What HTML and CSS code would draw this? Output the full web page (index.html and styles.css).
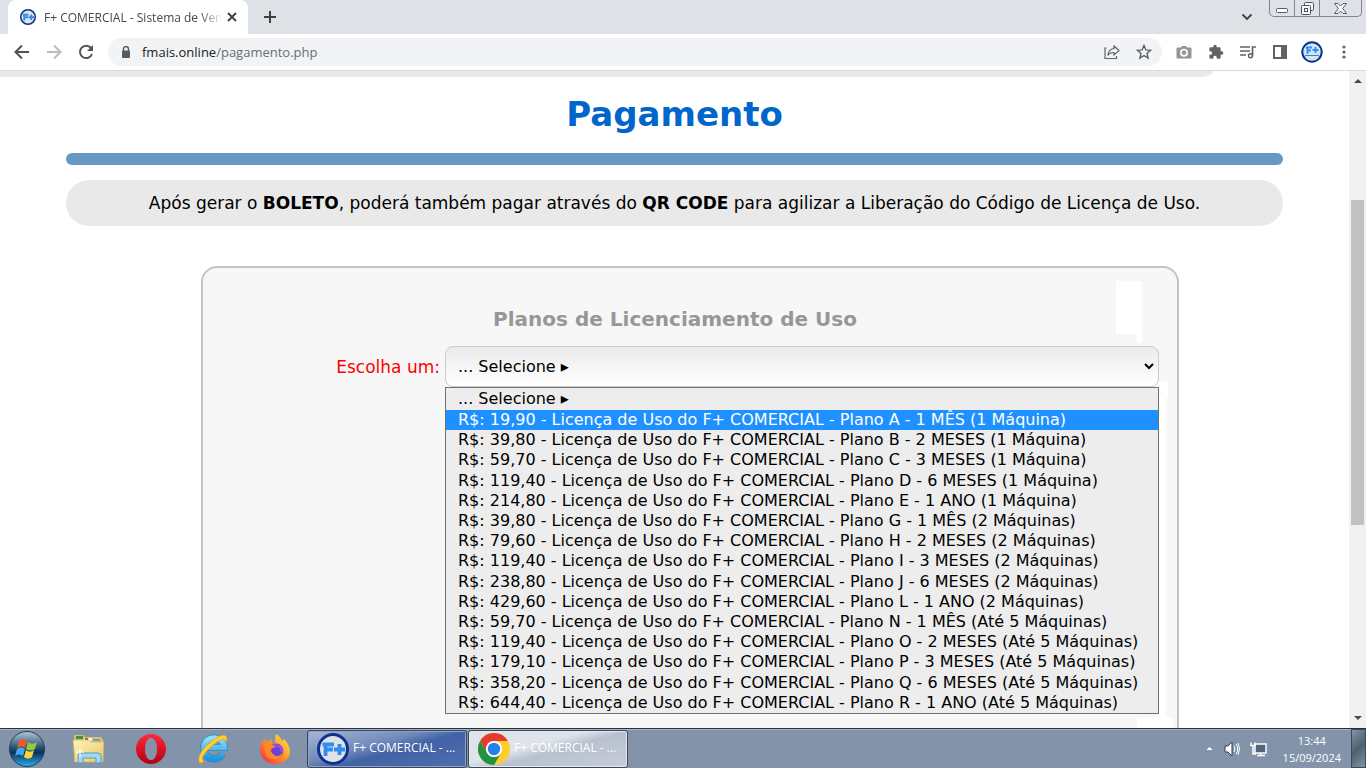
FILE: index.html
```html
<!DOCTYPE html>
<html lang="pt-BR">
<head>
<meta charset="utf-8">
<title>F+ COMERCIAL - Pagamento</title>
<link rel="stylesheet" href="styles.css">
</head>
<body>
<svg width="0" height="0" class="defs" aria-hidden="true">
  <defs>
    <linearGradient id="orb" x1="0" y1="0" x2="0" y2="1"><stop offset="0" stop-color="#b4c8d6"/><stop offset=".45" stop-color="#2b5478"/><stop offset=".6" stop-color="#0b3158"/><stop offset="1" stop-color="#25b4ee"/></linearGradient>
    <linearGradient id="folder" x1="0" y1="0" x2="1" y2="1"><stop offset="0" stop-color="#fff4b8"/><stop offset="1" stop-color="#e6c765"/></linearGradient>
    <linearGradient id="opera" x1="0" y1="0" x2="0" y2="1"><stop offset="0" stop-color="#ff2a3c"/><stop offset="1" stop-color="#b3000f"/></linearGradient>
    <linearGradient id="ie" x1="0" y1="0" x2="0" y2="1"><stop offset="0" stop-color="#8fe2ff"/><stop offset="1" stop-color="#1f93dc"/></linearGradient>
    <linearGradient id="fox" x1="1" y1="0" x2="0" y2="1"><stop offset="0" stop-color="#fff04a"/><stop offset=".45" stop-color="#ff9a28"/><stop offset="1" stop-color="#f5204e"/></linearGradient>
    <symbol id="fplus" viewBox="0 0 32 32">
      <circle cx="16" cy="16" r="14.500" fill="#dfe3e8" stroke="#0c318f" stroke-width="3"/>
      <path d="M5.500 11.500h11.500M8.500 10v13M8 16.500h8M17 16.500h11M22.500 11v11" fill="none" stroke="#2f8df0" stroke-width="3.800"/>
    </symbol>
  </defs>
</svg>
<div class="desktop">
  <header class="browser">
    <div class="tabstrip">
      <div class="tab">
        <svg class="favicon"><use href="#fplus"/></svg>
        <span class="tab-title">F+ COMERCIAL - Sistema de Ven</span>
        <button class="icon-btn tab-close" aria-label="Fechar guia"><svg width="10" height="10" viewBox="0 0 10 10"><path d="M1 1l8 8M9 1l-8 8" stroke="#3c4043" stroke-width="1.800"/></svg></button>
      </div>
      <button class="icon-btn new-tab" aria-label="Nova guia"><svg width="14" height="14" viewBox="0 0 14 14"><path d="M7 1v12M1 7h12" stroke="#3c4043" stroke-width="2"/></svg></button>
      <button class="icon-btn tab-search" aria-label="Pesquisar guias"><svg width="12" height="8" viewBox="0 0 12 8"><path d="M1.500 1.500L6 6l4.500-4.500" fill="none" stroke="#3c4043" stroke-width="1.800"/></svg></button>
      <div class="window-controls">
        <button class="win-btn win-min" aria-label="Minimizar"><svg width="13" height="5" viewBox="0 0 13 5"><rect x=".5" y=".5" width="11" height="4" rx="1" fill="#fff" stroke="#555c66"/></svg></button>
        <button class="win-btn" aria-label="Restaurar"><svg width="13" height="13" viewBox="0 0 13 13" fill="#f4f5f7" stroke="#4d545e"><rect x="3.500" y=".5" width="9" height="8" rx="1"/><rect x=".5" y="3.500" width="9" height="9" rx="1"/><rect x="3.500" y="6.500" width="3" height="3"/></svg></button>
        <button class="win-btn win-close" aria-label="Fechar"><svg width="13" height="11" viewBox="0 0 13 11"><path d="M.5.500h3.500l2.500 2.500L9 .5h3.500L8.700 5.500l3.800 5H9L6.500 8 4 10.500H.5l3.800-5z" fill="#f6f7f8" stroke="#555c66"/></svg></button>
      </div>
    </div>
    <div class="toolbar">
      <nav class="nav">
        <button class="icon-btn" aria-label="Voltar"><svg width="16" height="16" viewBox="0 0 16 16"><path d="M15 8H2M8 1.500L1.500 8 8 14.500" fill="none" stroke="#50545a" stroke-width="2"/></svg></button>
        <button class="icon-btn" aria-label="Avançar"><svg width="16" height="16" viewBox="0 0 16 16"><path d="M1 8h13M8 1.500L14.500 8 8 14.500" fill="none" stroke="#b9bbbe" stroke-width="2"/></svg></button>
        <button class="icon-btn" aria-label="Recarregar"><svg width="16" height="16" viewBox="0 0 16 16"><path d="M13 4a6.200 6.200 0 1 0 1 6" fill="none" stroke="#50545a" stroke-width="2"/><path d="M15 1v6H9z" fill="#50545a"/></svg></button>
      </nav>
      <div class="omnibox">
        <svg width="10" height="13" viewBox="0 0 10 13"><rect x="1" y="4.500" width="8" height="7.500" rx="1" fill="#555a60"/><path d="M2.500 5V3a2.500 2.500 0 0 1 5 0v2" fill="none" stroke="#555a60" stroke-width="1.400"/></svg>
        <a class="url" href="#">fmais.online<span>/pagamento.php</span></a>
        <button class="icon-btn" aria-label="Compartilhar"><svg width="16" height="16" viewBox="0 0 16 16" fill="none" stroke="#5f6368" stroke-width="1.200"><path d="M2.500 4H1v10.500h11.500V12"/><path d="M10 2l5 4.500L10 11V8.500c-3 0-5 .8-6 3C4.300 7.500 6 5 10 4.500z"/></svg></button>
        <button class="icon-btn" aria-label="Favoritar"><svg width="16" height="16" viewBox="0 0 16 16"><path d="M8 1.500l1.900 4.400 4.700.4-3.600 3.100 1.100 4.700L8 11.600l-4.100 2.500L5 9.400 1.400 6.300l4.700-.4z" fill="none" stroke="#5f6368" stroke-width="1.400"/></svg></button>
      </div>
      <div class="extensions">
        <button class="icon-btn" aria-label="Captura"><svg width="16" height="16" viewBox="0 0 16 16"><path d="M1.500 3.500H5L6 2h4l1 1.500h3.500q1 0 1 1v9q0 1-1 1h-13q-1 0-1-1v-9q0-1 1-1z" fill="#949494"/><circle cx="8" cy="8.700" r="3.200" fill="#999" stroke="#fff" stroke-width="1.600"/></svg></button>
        <button class="icon-btn" aria-label="Extensões"><svg width="16" height="16" viewBox="0 0 24 24"><path d="M20.500 11H19V7a2 2 0 0 0-2-2h-4V3.500a2.500 2.500 0 0 0-5 0V5H4a2 2 0 0 0-2 2v3.800h1.500a2.700 2.700 0 0 1 0 5.400H2V20a2 2 0 0 0 2 2h3.800v-1.500a2.700 2.700 0 0 1 5.400 0V22H17a2 2 0 0 0 2-2v-4h1.500a2.500 2.500 0 0 0 0-5z" fill="#5f6368"/></svg></button>
        <button class="icon-btn" aria-label="Mídia"><svg width="16" height="16" viewBox="0 0 16 16"><path d="M0 3h10M0 7h10M0 11h6M16 3h-3.500v8.500" fill="none" stroke="#5f6368" stroke-width="1.700"/><circle cx="10.500" cy="11.800" r="2" fill="none" stroke="#5f6368" stroke-width="1.500"/></svg></button>
        <button class="icon-btn" aria-label="Painel lateral"><svg width="16" height="16" viewBox="0 0 16 16"><path d="M1 1h14v14H1zM3 3v10h6V3z" fill="#5f6368" fill-rule="evenodd"/></svg></button>
        <button class="icon-btn avatar" aria-label="Perfil"><svg width="22" height="22" viewBox="0 0 22 22"><circle cx="11" cy="11" r="9.700" fill="#dbe4ee" stroke="#0a3190" stroke-width="2"/><path d="M5 6.500h6M6.500 6v7M6 9.500h4M11.500 9h6M14.500 6v6" fill="none" stroke="#2793f1" stroke-width="1.900"/><path d="M4 14.500h14" stroke="#2f83d4"/></svg></button>
        <button class="icon-btn" aria-label="Menu"><svg width="16" height="16" viewBox="0 0 16 16" fill="#5f6368"><circle cx="8" cy="3" r="1.600"/><circle cx="8" cy="8" r="1.600"/><circle cx="8" cy="13" r="1.600"/></svg></button>
      </div>
    </div>
  </header>
  <div class="viewport">
    <main class="page">
      <div class="top-strip"></div>
      <h1>Pagamento</h1>
      <div class="rule"></div>
      <p class="notice">Após gerar o <b>BOLETO</b>, poderá também pagar através do <b>QR CODE</b> para agilizar a Liberação do Código de Licença de Uso.</p>
      <form class="card">
        <h2>Planos de Licenciamento de Uso</h2>
        <div class="field">
          <label for="plan">Escolha um:</label>
          <div class="picker">
            <select id="plan" class="plan-select"><option>... Selecione ▸</option></select>
            <ul class="options" role="listbox" aria-label="Planos">
              <li>... Selecione ▸</li>
              <li class="active">R$: 19,90 - Licença de Uso do F+ COMERCIAL - Plano A - 1 MÊS (1 Máquina)</li>
              <li>R$: 39,80 - Licença de Uso do F+ COMERCIAL - Plano B - 2 MESES (1 Máquina)</li>
              <li>R$: 59,70 - Licença de Uso do F+ COMERCIAL - Plano C - 3 MESES (1 Máquina)</li>
              <li>R$: 119,40 - Licença de Uso do F+ COMERCIAL - Plano D - 6 MESES (1 Máquina)</li>
              <li>R$: 214,80 - Licença de Uso do F+ COMERCIAL - Plano E - 1 ANO (1 Máquina)</li>
              <li>R$: 39,80 - Licença de Uso do F+ COMERCIAL - Plano G - 1 MÊS (2 Máquinas)</li>
              <li>R$: 79,60 - Licença de Uso do F+ COMERCIAL - Plano H - 2 MESES (2 Máquinas)</li>
              <li>R$: 119,40 - Licença de Uso do F+ COMERCIAL - Plano I - 3 MESES (2 Máquinas)</li>
              <li>R$: 238,80 - Licença de Uso do F+ COMERCIAL - Plano J - 6 MESES (2 Máquinas)</li>
              <li>R$: 429,60 - Licença de Uso do F+ COMERCIAL - Plano L - 1 ANO (2 Máquinas)</li>
              <li>R$: 59,70 - Licença de Uso do F+ COMERCIAL - Plano N - 1 MÊS (Até 5 Máquinas)</li>
              <li>R$: 119,40 - Licença de Uso do F+ COMERCIAL - Plano O - 2 MESES (Até 5 Máquinas)</li>
              <li>R$: 179,10 - Licença de Uso do F+ COMERCIAL - Plano P - 3 MESES (Até 5 Máquinas)</li>
              <li>R$: 358,20 - Licença de Uso do F+ COMERCIAL - Plano Q - 6 MESES (Até 5 Máquinas)</li>
              <li>R$: 644,40 - Licença de Uso do F+ COMERCIAL - Plano R - 1 ANO (Até 5 Máquinas)</li>
            </ul>
          </div>
        </div>
        <span class="patch patch-top"></span>
        <span class="patch patch-notch"></span>
        <span class="patch patch-side"></span>
        <span class="patch patch-edge"></span>
        <span class="patch patch-bottom"></span>
      </form>
    </main>
    <div class="scrollbar">
      <svg width="8" height="5" viewBox="0 0 8 5"><path d="M0 5l4-4 4 4z" fill="#454b52"/></svg>
      <div class="track"><div class="thumb"></div></div>
      <svg width="8" height="5" viewBox="0 0 8 5"><path d="M0 0l4 4 4-4z" fill="#454b52"/></svg>
    </div>
  </div>
  <footer class="taskbar">
    <button class="icon-btn launcher start" aria-label="Iniciar"><svg width="38" height="38" viewBox="0 0 38 38"><circle cx="19" cy="19" r="17.500" fill="url(#orb)" stroke="#1d3d59"/><path d="M11 11c3-2 5-2 8 0l-2 7c-3-2-5-2-8 0z" fill="#f0562a"/><path d="M20 12c3 2 5 2 9 0l-2 7c-3 2-6 2-9 0z" fill="#8ccc40"/><path d="M9 19c3-2 5-2 8 0l-2 7c-3-2-5-2-8 0z" fill="#45a9ee"/><path d="M18 20c3 2 5 2 8 0l-2 7c-3 2-5 2-8 0z" fill="#ffd23c"/></svg></button>
    <button class="icon-btn launcher" aria-label="Explorador"><svg width="34" height="32" viewBox="0 0 34 32"><path d="M2 5V2h9l2 2h16l2 3v22H2z" fill="#e0be67"/><path d="M4 3h7v3H4z" fill="#389448"/><path d="M12 5h8v3h-8z" fill="#f1f1f1"/><path d="M13 5h3v2h-3z" fill="#d24424"/><path d="M21 6h7v2h-7z" fill="#59a7df"/><path d="M1 7h16l2 2h13l-1 20H3z" fill="url(#folder)" stroke="#d1b05a" stroke-width=".7"/><path d="M6 30v-7q0-3 3-3h17q3 0 3 3v7h-5v-5H11v5z" fill="#a6d7f2" stroke="#4a9bc9"/><path d="M8 15v9M4 19h8" stroke="#fff"/></svg></button>
    <button class="icon-btn launcher" aria-label="Opera"><svg width="32" height="32" viewBox="0 0 32 32"><path fill-rule="evenodd" d="M16 1C7.500 1 1 8 1 16s6.500 15 15 15 15-7 15-15S24.500 1 16 1zm0 4c4 0 6 5 6 11s-2 11-6 11-6-5-6-11 2-11 6-11z" fill="url(#opera)"/></svg></button>
    <button class="icon-btn launcher" aria-label="Internet Explorer"><svg width="34" height="32" viewBox="0 0 34 32"><path d="M27 21a10.500 10.500 0 1 1 1.500-6.500H9" fill="none" stroke="#2a86c4" stroke-width="7"/><path d="M27 21a10.500 10.500 0 1 1 1.500-6.500H9" fill="none" stroke="url(#ie)" stroke-width="5.500"/><path d="M6 30C0 31 2 20 12 11S31-1 31 6c0 1 0 2-1 4 0-6-6-4-14 3S4 27 8 28z" fill="#ffce36" stroke="#d39a1d" stroke-width=".6"/></svg></button>
    <button class="icon-btn launcher" aria-label="Firefox"><svg width="32" height="32" viewBox="0 0 32 32"><path d="M17 1c4 2 5 5 6 7l2-2c4 4 6 8 6 13 0 7-7 12-15 12S1 25 1 17c0-4 1-7 3-9l2-3 2 4 5-3-1 4 4 1V8c0-3 0-5 1-7z" fill="url(#fox)"/><circle cx="17" cy="18" r="7.500" fill="#7040dd"/><path d="M5 11c5-2 9 0 12 4-5-1-6 2-4 5 3 4 8 4 11-1-1 9-15 10-18 1z" fill="#ff8a24"/><path d="M15 12c6 0 8 3 8 7" fill="none" stroke="#a64cee" stroke-width="2"/></svg></button>
    <div class="tasks">
      <button class="task task-active"><svg width="32" height="32"><use href="#fplus"/></svg><span>F+ COMERCIAL - ...</span></button>
      <button class="task"><svg width="32" height="32" viewBox="0 0 32 32"><circle cx="16" cy="16" r="16" fill="#ffcd2d"/><path d="M2.140 8A16 16 0 0 1 29.860 8H16a8 8 0 0 0-6.930 12z" fill="#e33b2e"/><path d="M2.140 8L9.070 20A8 8 0 0 0 22.930 20L16 32A16 16 0 0 1 2.140 8z" fill="#229342"/><circle cx="16" cy="16" r="8" fill="#fff"/><circle cx="16" cy="16" r="6.200" fill="#2580ee"/></svg><span>F+ COMERCIAL - ...</span></button>
    </div>
    <div class="tray">
      <svg width="9" height="5" viewBox="0 0 9 5"><path d="M.5 4.500L4.500.5l4 4z" fill="#fff" stroke="#54647a" stroke-width=".5"/></svg>
      <svg width="16" height="16" viewBox="0 0 16 16"><path d="M1 5h3l4-4v14l-4-4H1z" fill="#fff" stroke="#34404f"/><path d="M10 5q2 3 0 6M12 3q3.500 5 0 10M14 2q3 6 0 12" fill="none" stroke="#fff"/></svg>
      <svg width="17" height="16" viewBox="0 0 17 16"><rect x="5" y="3" width="11" height="9" fill="#53657b" stroke="#fff" stroke-width="1.500"/><path d="M7 14.500h8M10.500 12v2M1 1.500v3h4v-3M3 5v8h3" fill="none" stroke="#fff" stroke-width="1.500"/></svg>
      <div class="clock"><time>13:44</time><span>15/09/2024</span></div>
      <button class="show-desktop" aria-label="Mostrar área de trabalho"></button>
    </div>
  </footer>
</div>
</body>
</html>
```
FILE: styles.css
```css
* { box-sizing: border-box; }
body { margin: 0; font-family: "Open Sans", "Noto Sans", sans-serif; }
button { font: inherit; cursor: pointer; }
svg { display: block; flex: none; }
.defs { position: absolute; }
.desktop { height: 100vh; display: flex; flex-direction: column; overflow: hidden; background: #fff; }
.icon-btn { display: flex; align-items: center; justify-content: center; padding: 0; border: 0; background: none; }

.tabstrip { display: flex; align-items: center; height: 34px; padding-left: 8px; background: #dee1e6; }
.tab { display: flex; align-items: center; width: 240px; height: 34px; padding: 0 10px 0 12px; background: #fff; border-radius: 8px 8px 0 0; }
.favicon { width: 16px; height: 16px; margin-right: 8px; }
.tab-title { flex: 1; white-space: nowrap; font-size: 12px; color: #45494d; mask-image: linear-gradient(90deg, #000 88%, transparent); }
.tab-close { width: 12px; margin-left: 4px; }
.new-tab { width: 28px; height: 28px; margin-left: 8px; }
.tab-search { width: 28px; height: 28px; margin-left: auto; margin-right: 8px; }
.window-controls { display: flex; align-self: flex-start; height: 17px; margin-right: 4px; border: 1px solid #80858c; border-top: 0; border-radius: 0 0 5px 5px; }
.win-btn { display: flex; align-items: center; justify-content: center; width: 25px; padding: 0; border: 0; border-right: 1px solid #80858c; background: none; }
.win-min { align-items: flex-end; padding-bottom: 3px; }
.win-close { width: 41px; border-right: 0; }

.toolbar { display: flex; align-items: center; height: 37px; padding: 0 14px; border-bottom: 1px solid #d8dadd; background: #fff; }
.nav { display: flex; gap: 16px; margin-right: 14px; }
.omnibox { flex: 1; display: flex; align-items: center; gap: 16px; height: 28px; padding: 0 10px 0 13px; border-radius: 14px; background: #f1f3f4; }
.omnibox > svg { margin-right: -10px; }
.url { flex: 1; padding-left: 5px; font-size: 13px; color: #202124; text-decoration: none; }
.url span { color: #6a6e73; }
.extensions { display: flex; align-items: center; gap: 16px; margin-left: 14px; }
.avatar { width: 16px; }

.viewport { flex: 1; min-height: 0; display: flex; }
.page { flex: 1; display: flex; flex-direction: column; min-width: 0; padding: 0 66px; overflow: hidden; font-family: Verdana, "DejaVu Sans", sans-serif; }
.top-strip { flex: none; height: 6px; margin: 0 70px 0 -66px; background: #e9e9e9; border-bottom-right-radius: 12px 6px; }
h1 { margin: 17px 0 18px; font-size: 34px; line-height: 41px; text-align: center; color: #0066cc; }
.rule { flex: none; height: 12px; border-radius: 6px; background: #6998c4; }
.notice { margin: 15px 0 40px; padding: 12px 16px; border-radius: 23px; background: #e9e9e9; font-size: 17px; line-height: 22px; text-align: center; }
.card { position: relative; flex: none; min-height: 500px; margin: 0 104px 0 135px; padding: 38px 18px 0; border: 2px solid #c3c3c3; border-radius: 16px; background: #f7f7f7; }
h2 { margin: 0 30px 14px 0; font-size: 20px; line-height: 26px; text-align: center; color: #979797; }
.field { display: grid; grid-template-columns: 219px 1fr; gap: 5px; }
.field label { font-size: 17px; line-height: 42px; text-align: right; color: #f00; }
.picker { position: relative; z-index: 1; font-size: 16px; }
.plan-select { appearance: none; display: block; width: 100%; height: 41px; padding: 0 12px; border: 1px solid #ccc; border-radius: 8px; background: url("data:image/svg+xml,%3Csvg xmlns='http://www.w3.org/2000/svg' width='10' height='7'%3E%3Cpath d='M1 1l4 4 4-4' fill='none' stroke='black' stroke-width='2'/%3E%3C/svg%3E") right 4px center no-repeat, linear-gradient(#ebebeb, #fff); font: inherit; color: #000; }
.options { position: absolute; top: 41px; left: 0; right: 0; display: grid; grid-template-rows: 22px; grid-auto-rows: 1fr; align-items: stretch; height: 327px; margin: 0; padding: 0; border: 1px solid #707070; background: #ededed; list-style: none; }
.options li { display: flex; align-items: center; padding-left: 12px; line-height: 20px; white-space: nowrap; }
.options .active { background: #1e90ff; color: #fff; }
.patch { position: absolute; background: #fff; }
.patch-top { top: 13px; right: 35px; width: 26px; height: 53px; }
.patch-notch { top: 66px; right: 35px; width: 5px; height: 9px; }
.patch-side { top: 113px; right: 9px; width: 10px; height: 17px; }
.patch-edge { top: 130px; right: 11px; width: 8px; height: 319px; }
.patch-bottom { top: 449px; right: 4px; width: 36px; height: 20px; }

.scrollbar { display: flex; flex-direction: column; align-items: center; width: 17px; padding: 7px 0; background: #f1f1f1; }
.track { flex: 1; width: 13px; padding-top: 117px; }
.thumb { height: 63%; background: #c1c1c1; }

.taskbar { display: flex; align-items: center; height: 40px; border-top: 1px solid #273142; background: #8293aa; box-shadow: inset 0 1px #a8b4c4; }
.launcher { width: 62px; }
.start { width: 58px; padding-right: 4px; }
.tasks { display: flex; gap: 1px; margin-left: 1px; }
.task { display: flex; align-items: center; gap: 4px; width: 160px; height: 38px; padding: 0 9px; border: 1px solid #38455a; border-radius: 3px; background: linear-gradient(165deg, #dfe4eb 0 40%, #b8c1ce 55%, #c6cdd8); box-shadow: inset 0 0 0 1px #e5eaf0; color: #fff; font-size: 12px; white-space: nowrap; }
.task span { padding-bottom: 2px; }
.task-active { background: linear-gradient(165deg, #a8b8d4 0, #7089ba 40%, #4162a5 55%, #506eae); box-shadow: inset 0 0 0 1px #8ca4cd; }
.tray { display: flex; align-items: center; gap: 10px; height: 100%; margin-left: auto; color: #fff; font-size: 11px; }
.clock { display: flex; flex-direction: column; align-items: center; margin-left: 6px; line-height: 17px; }
.show-desktop { width: 15px; height: 100%; padding: 0; border: 1px solid #3d4a5c; background: linear-gradient(135deg, #8593a5, #506070 50%, #8492a5); }
```
